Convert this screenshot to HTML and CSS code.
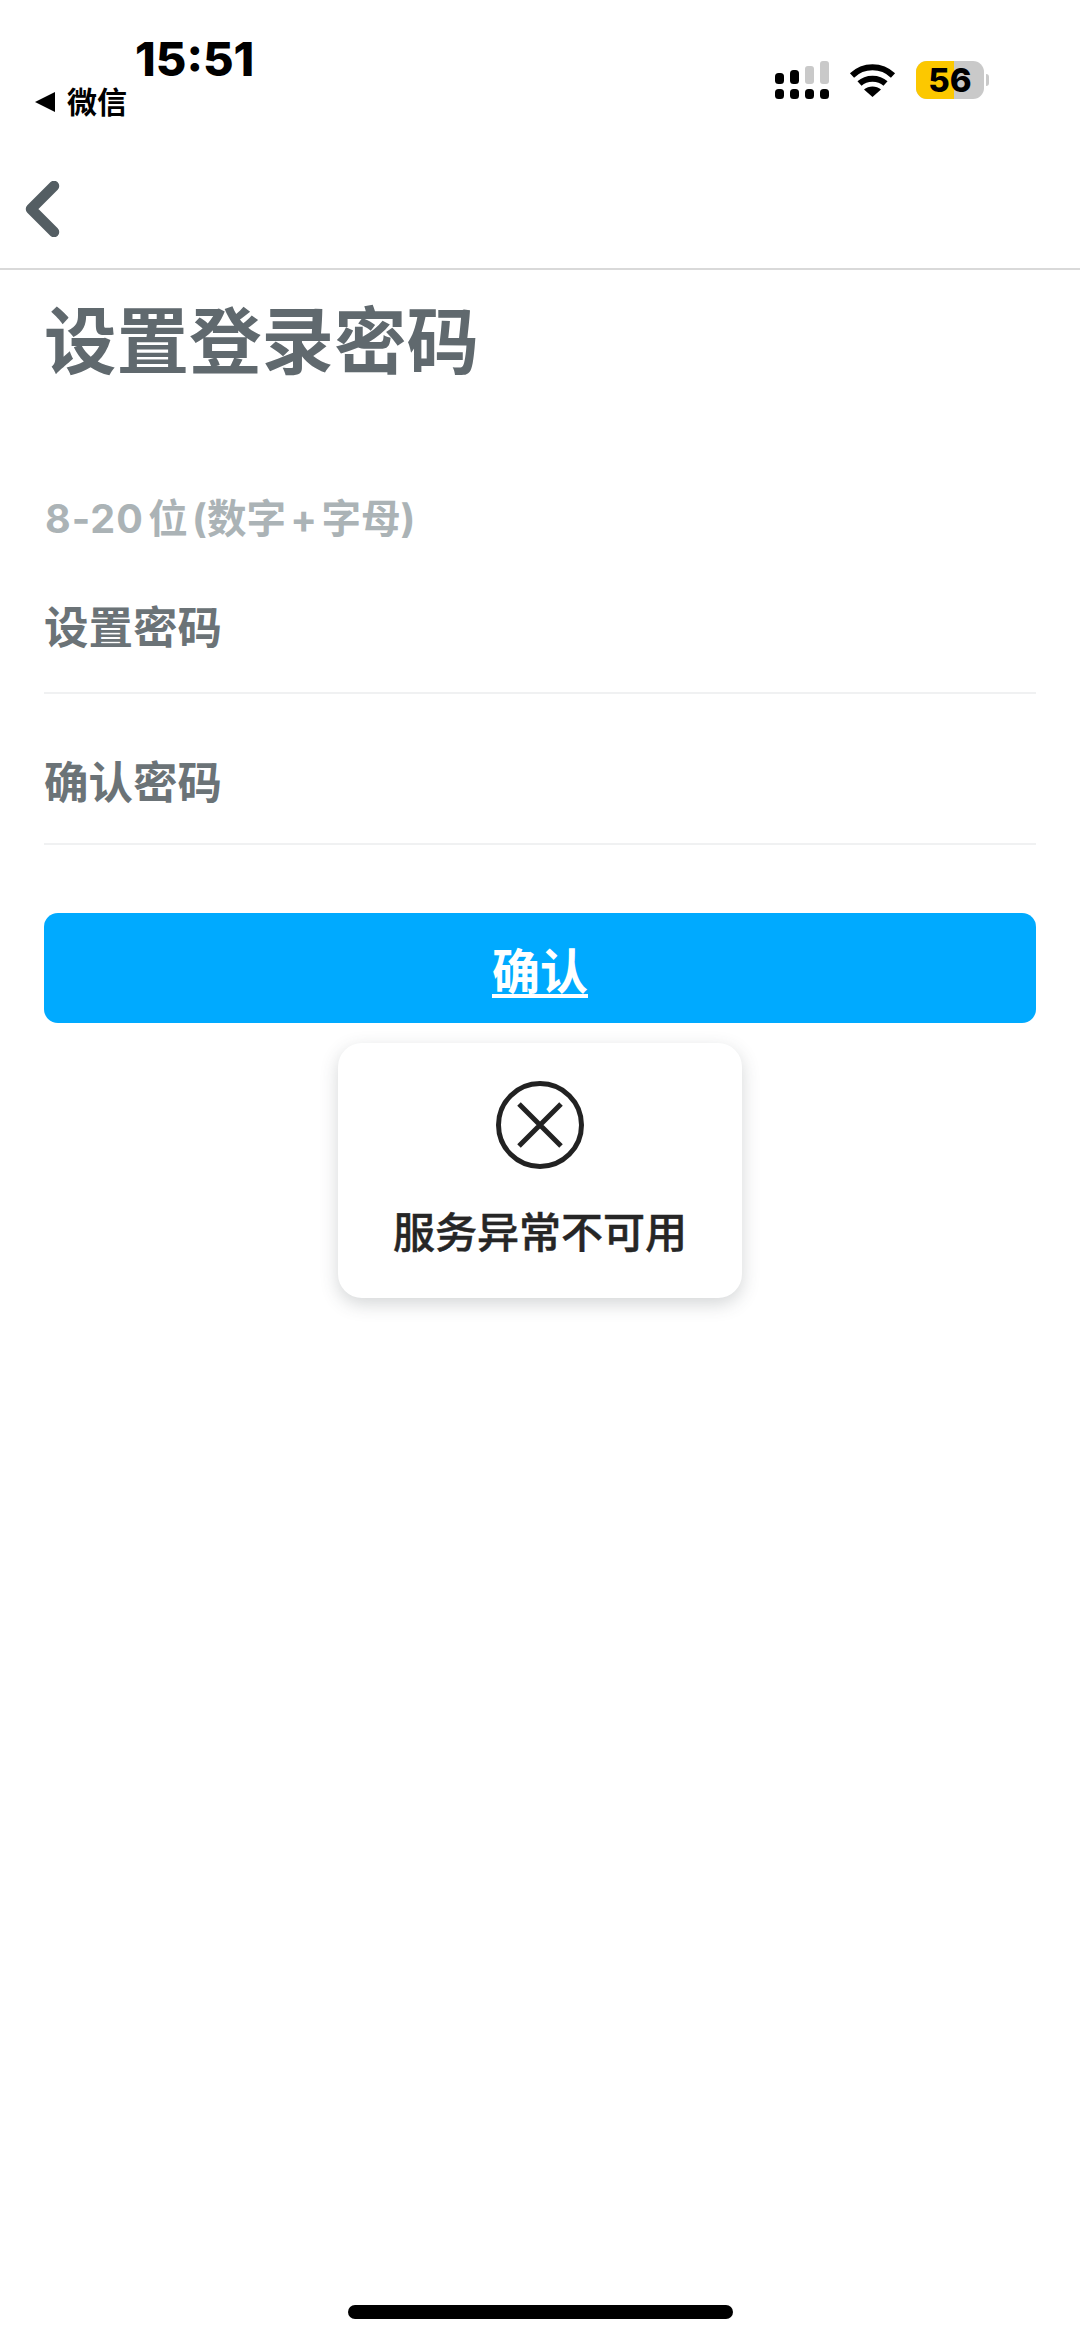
FILE: index.html
```html
<!DOCTYPE html>
<html lang="zh-CN">
<head>
<meta charset="utf-8">
<title>设置登录密码</title>
<link rel="stylesheet" href="styles.css">
</head>
<body>
<div class="phone">
  <header class="status">
    <div class="status-left">
      <div class="time">15:51</div>
      <div class="back-app"><span class="tri"></span><span>微信</span></div>
    </div>
    <div class="status-right">
      <svg class="signal" width="54" height="38" viewBox="0 0 54 38">
        <g fill="#000">
          <rect x="0" y="12" width="9" height="11" rx="3.500"/><rect x="15" y="9" width="9" height="14" rx="3.500"/>
          <rect x="0" y="28" width="9" height="10" rx="3.500"/><rect x="15" y="28" width="9" height="10" rx="3.500"/>
          <rect x="30" y="28" width="9" height="10" rx="3.500"/><rect x="45" y="28" width="9" height="10" rx="3.500"/>
        </g>
        <g fill="#c9c9c9"><rect x="30" y="5" width="9" height="18" rx="3"/><rect x="45" y="0" width="9" height="23" rx="3"/></g>
      </svg>
      <svg class="wifi" width="47" height="34" viewBox="0 0 46 34">
        <g fill="none" stroke="#000" stroke-width="6">
          <path d="M2.500 12.500C14 1.500 32 1.500 43.500 12.500"/>
          <path d="M10 20.500C17 14 29 14 36 20.500"/>
        </g>
        <path d="M14.500 26.500C19 22.500 27 22.500 31.500 26.500L23 34Z" fill="#000"/>
      </svg>
      <div class="battery"><div class="battery-body"><div class="battery-fill"></div><span class="battery-num">56</span></div><span class="battery-cap"></span></div>
    </div>
  </header>
  <nav class="nav">
    <svg width="36" height="56" viewBox="0 0 36 56"><path d="M29 5 6 28l23 23" fill="none" stroke="#545e63" stroke-width="10.500" stroke-linecap="round" stroke-linejoin="round"/></svg>
  </nav>
  <main class="content">
    <h1 class="title">设置登录密码</h1>
    <p class="hint"><span class="hint-num">8-20</span> 位 (数字 + 字母)</p>
    <div class="field field-first">设置密码</div>
    <div class="field field-second">确认密码</div>
    <button class="confirm">确认</button>
  </main>
  <div class="toast">
    <svg width="88" height="88" viewBox="0 0 88 88"><circle cx="44" cy="44" r="41.500" fill="none" stroke="#222" stroke-width="5"/><path d="M23 23l42 42M65 23 23 65" stroke="#222" stroke-width="5" fill="none"/></svg>
    <div class="toast-text">服务异常不可用</div>
  </div>
  <div class="home-bar"></div>
</div>
</body>
</html>
```
FILE: styles.css
```css
* { box-sizing: border-box; }
html, body { margin: 0; padding: 0; background: #fff; }
body { font-family: "Inter", "Noto Sans CJK SC", sans-serif; }
.phone { position: relative; width: 1080px; height: 2341px; background: #fff; overflow: hidden; }
.status { height: 120px; display: flex; justify-content: space-between; padding: 31px 91px 0 35px; }
.status-left { display: flex; flex-direction: column; }
.time { font-size: 47px; line-height: 56px; font-weight: 800; color: #000; padding-left: 100px; }
.back-app { display: flex; align-items: center; gap: 12px; font-size: 30px; line-height: 30px; font-weight: 700; color: #000; }
.tri { width: 0; height: 0; border-style: solid; border-width: 10px 20px 10px 0; border-color: transparent #000 transparent transparent; }
.status-right { display: flex; align-items: flex-start; padding-top: 30px; }
.signal { margin-right: 20px; }
.wifi { margin-right: 20px; margin-top: 2px; }
.battery { display: flex; align-items: center; }
.battery-body { position: relative; width: 68px; height: 38px; border-radius: 11px; background: #c9c9c9; overflow: hidden; display: flex; align-items: center; justify-content: center; }
.battery-fill { position: absolute; left: 0; top: 0; bottom: 0; width: 56%; background: #fcc800; }
.battery-num { position: relative; font-size: 33px; font-weight: 800; color: #000; line-height: 38px; }
.battery-cap { width: 3px; height: 12px; background: #c9c9c9; border-radius: 0 3px 3px 0; margin-left: 2px; }
.nav { height: 150px; padding: 61px 0 0 25px; border-bottom: 2px solid #d9d9d9; }
.content { padding: 0 44px; }
.title { margin: 22px 0 0; font-size: 72.500px; line-height: 100px; font-weight: 700; color: #60696e; }
.hint { margin: 102px 0 0; font-size: 39.500px; line-height: 50px; font-weight: 700; color: #abb3b6; padding-left: 1px; word-spacing: -5px; }
.hint-num { letter-spacing: 1px; }
.field { border-bottom: 2px solid #f0f1f2; font-size: 44.500px; font-weight: 700; color: #6b7377; line-height: 60px; }
.field-first { height: 150px; padding-top: 54px; }
.field-second { height: 151px; padding-top: 59px; }
.confirm { display: block; width: 100%; height: 110px; margin-top: 68px; border: 0; border-radius: 14px; background: #00aaff; color: #fff; font-family: inherit; font-size: 48px; font-weight: 700; text-decoration: underline; text-decoration-thickness: 4px; text-underline-offset: 5px; padding: 0; }
.toast { position: absolute; left: 338px; top: 1043px; width: 404px; height: 255px; background: #fff; border-radius: 24px; box-shadow: 0 6px 18px rgba(60, 70, 75, 0.22); display: flex; flex-direction: column; align-items: center; padding-top: 38px; }
.toast-text { margin-top: 34px; font-size: 42px; line-height: 60px; font-weight: 500; color: #262626; -webkit-text-stroke: 0.45px #262626; }
.home-bar { position: absolute; left: 348px; top: 2305px; width: 385px; height: 14px; border-radius: 7px; background: #000; }
```
